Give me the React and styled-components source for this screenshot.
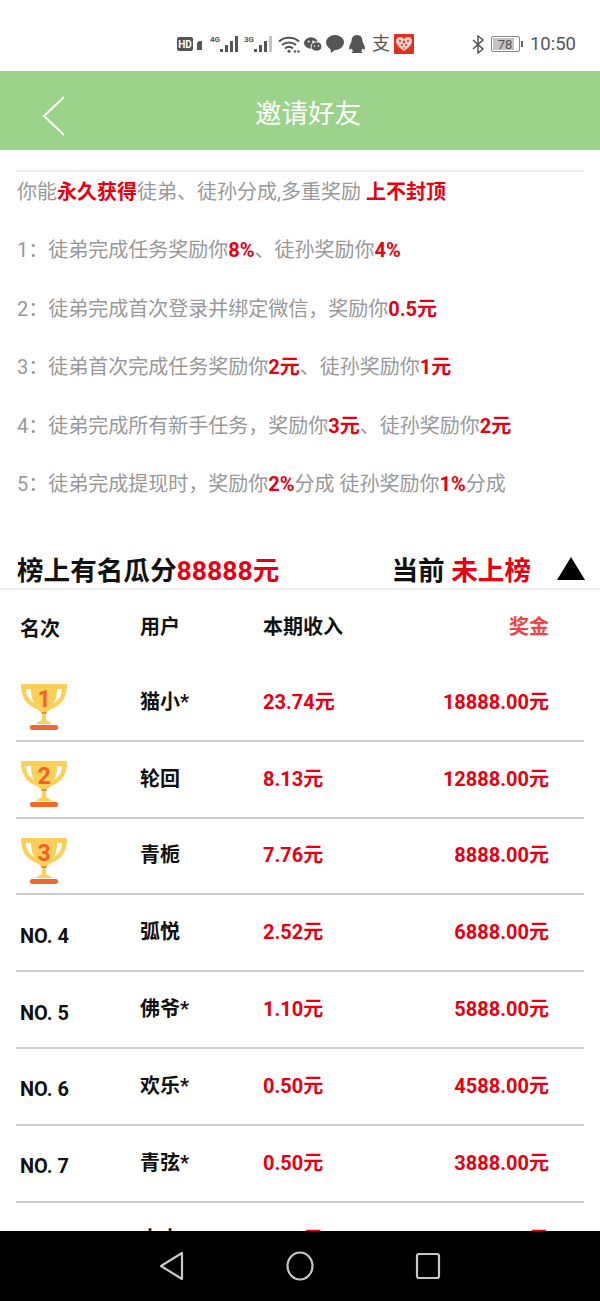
import React from 'react';
import styled, { createGlobalStyle } from 'styled-components';

const GlobalStyle = createGlobalStyle`
  html, body {
    margin: 0;
    padding: 0;
    background: #fff;
    font-family: Roboto, "Noto Sans CJK SC", sans-serif;
  }
  * { box-sizing: border-box; }
`;

const Screen = styled.div`
  width: 600px;
  height: 1301px;
  display: flex;
  flex-direction: column;
  overflow: hidden;
  background: #fff;
`;

const StatusBar = styled.div`
  height: 71px;
  flex: none;
  display: flex;
  align-items: center;
  padding: 17px 24px 0 177px;
  color: #555;
`;

const NotifyIcons = styled.div`
  display: flex;
  align-items: center;
  gap: 4px;
`;

const SystemIcons = styled.div`
  margin-left: auto;
  display: flex;
  align-items: center;
  gap: 6px;
`;

const Clock = styled.span`
  font-size: 18.5px;
  color: #555;
`;

const Header = styled.header`
  height: 79px;
  flex: none;
  background: #9bd38a;
  display: flex;
  align-items: center;
  padding-left: 42px;
`;

const BackIcon = styled.svg`
  margin-top: 10px;
`;

const HeaderTitle = styled.h1`
  margin: 2px 0 0 189px;
  font-size: 26.5px;
  font-weight: 400;
  color: #fff;
`;

const Content = styled.main`
  flex: 1;
  min-height: 0;
  overflow: hidden;
`;

const Intro = styled.section`
  margin: 20px 16px 0;
  border-top: 2px solid #eeeeee;
  display: flex;
  flex-direction: column;
  gap: 18.4px;
`;

const IntroLine = styled.p`
  margin: 0;
  height: 40px;
  padding-left: 1px;
  line-height: 40px;
  font-size: 20px;
  color: #999;
  white-space: nowrap;
`;

const Hot = styled.b`
  color: #e60012;
  font-weight: 700;
`;

const BoardHead = styled.div`
  margin-top: 34px;
  height: 52px;
  padding: 12px 15px 0 17px;
  border-bottom: 2px solid #eeeeee;
  display: flex;
  align-items: center;
  color: #111;
  font-size: 26.6px;
  font-weight: 700;
  white-space: nowrap;
`;

const BoardRed = styled.span`
  color: #e60012;
`;

const CurrentRank = styled.div`
  margin-left: auto;
`;

const Toggle = styled.div`
  margin-left: 26px;
  width: 0;
  height: 0;
  border-left: 14px solid transparent;
  border-right: 14px solid transparent;
  border-bottom: 23px solid #000;
`;

const Row = styled.div`
  margin: 0 16px;
  height: ${p => (p.$head ? '75px' : '76.8px')};
  display: grid;
  grid-template-columns: 120px 123px 120px 1fr;
  align-items: center;
  padding: 0 35px 4px 4px;
  border-bottom: ${p => (p.$head ? 'none' : '2px solid #cfcfcf')};
  font-size: 20px;
  font-weight: 700;
  color: #111;
  white-space: nowrap;
`;

const RankCell = styled.div`
  padding-top: ${p => (p.$medal ? '14px' : p.$label ? '4px' : '10px')};
  padding-left: ${p => (p.$medal ? '1px' : '0')};
`;

const Income = styled.div`
  color: #e60012;
`;

const Prize = styled.div`
  text-align: right;
  color: ${p => (p.$soft ? '#ef4444' : '#e60012')};
`;

const NavBar = styled.nav`
  height: 70px;
  flex: none;
  background: #000;
  display: flex;
  align-items: center;
  justify-content: center;
  gap: 101px;
`;

const Trophy = ({ n }) => (
  <svg width="46" height="48" viewBox="0 0 46 48" style={{ display: 'block' }}>
    <path d="M0 1H46C46 13 42 22 30 26C28 28 26 29 25 30H21C20 29 18 28 16 26C4 22 0 13 0 1Z" fill="#fbcf58" />
    <path d="M5 6H10C10 12 11 16 13 20C8 17 5 12 5 6Z" fill="#fff" />
    <path d="M41 6H36C36 12 35 16 33 20C38 17 41 12 41 6Z" fill="#fff" />
    <rect x="20.500" y="29" width="5" height="2" fill="#f28a2e" />
    <path d="M21.500 31h3l1 6h-5z" fill="#fbcf58" />
    <path d="M15 41c2-2 5-4 8-4s6 2 8 4z" fill="#fbcf58" />
    <rect x="9" y="42" width="28" height="5" rx="2" fill="#f2672a" />
    <text x="23" y="23.500" textAnchor="middle" fontSize="23" fontWeight="700" fontFamily="Roboto" fill="#f0622a">{n}</text>
  </svg>
);

const Signal = ({ label, faded }) => (
  <svg width="30" height="20" viewBox="0 0 30 20" style={{ display: 'block' }}>
    <text x="0" y="8" fontSize="8" fontWeight="700" fontFamily="Roboto" fill="#555">{label}</text>
    <rect x="10" y="15" width="3" height="3" fill="#555" />
    <rect x="15" y="11" width="3" height="7" fill="#555" />
    <rect x="20" y="7" width="3" height="11" fill="#555" />
    <rect x="25" y="2" width="3" height="16" fill={faded ? '#c4c4c4' : '#555'} />
  </svg>
);

const HdBadge = () => (
  <svg width="29" height="14" viewBox="0 0 29 14" style={{ display: 'block' }}>
    <rect x="0" y="0" width="16" height="14" rx="2" fill="#555" />
    <text x="8" y="11" textAnchor="middle" fontSize="10" fontWeight="700" fontFamily="Roboto" fill="#fff">HD</text>
    <path d="M20 6l2-2h3v9h-5z" fill="#555" />
  </svg>
);

const Wifi = () => (
  <svg width="22" height="17" viewBox="0 0 22 17" fill="none" stroke="#555" strokeWidth="2" style={{ display: 'block' }}>
    <path d="M1 5.500c5.500-5 14.500-5 20 0" />
    <path d="M4 9c4-3.500 10-3.500 14 0" />
    <path d="M7 12.500c2.500-2 5.500-2 8 0" />
    <circle cx="11" cy="15.300" r="1.500" fill="#555" stroke="none" />
    <circle cx="17" cy="15.500" r="1.200" fill="#555" stroke="none" />
    <circle cx="20.500" cy="15.500" r="1.200" fill="#555" stroke="none" />
  </svg>
);

const Wechat = () => (
  <svg width="18" height="15" viewBox="0 0 18 15" style={{ display: 'block' }}>
    <ellipse cx="7" cy="6" rx="7" ry="5.800" fill="#555" />
    <ellipse cx="12.500" cy="9.500" rx="5.500" ry="4.700" fill="#555" stroke="#fff" strokeWidth="1" />
    <circle cx="4.700" cy="4.500" r="1" fill="#fff" />
    <circle cx="9" cy="4.500" r="1" fill="#fff" />
    <circle cx="10.500" cy="9" r=".8" fill="#fff" />
    <circle cx="14.500" cy="9" r=".8" fill="#fff" />
  </svg>
);

const Bubble = () => (
  <svg width="18" height="18" viewBox="0 0 18 18" style={{ display: 'block' }}>
    <ellipse cx="9" cy="7.500" rx="9" ry="7.500" fill="#555" />
    <path d="M4 12l1 6 5-4z" fill="#555" />
  </svg>
);

const Penguin = () => (
  <svg width="18" height="19" viewBox="0 0 18 19" style={{ display: 'block' }}>
    <path d="M9 0c3.800 0 5.500 2.800 5.500 6.200 0 1 1.800 3.300 2.300 5.800.4 2-.3 3-1.100 2.500l-1.200-1c-.3 1-.8 2-1.500 2.700 1.100.3 1.700 1.300 1.200 1.800H4c-.5-.5 0-1.500 1.200-1.800-.7-.7-1.200-1.700-1.500-2.700l-1.200 1C1.700 15 1 14 1.200 12 1.700 9.500 3.500 7.200 3.500 6.200 3.500 2.800 5.200 0 9 0z" fill="#555" />
  </svg>
);

const HeartApp = () => (
  <svg width="20" height="20" viewBox="0 0 20 20" style={{ display: 'block' }}>
    <rect width="20" height="20" rx="1" fill="#e0301e" />
    <path d="M10 17C5 13.500 2 10.500 2 7c0-2.500 2-4 4-4 1.700 0 3.100.9 4 2.300C10.900 3.900 12.300 3 14 3c2 0 4 1.500 4 4 0 3.500-3 6.500-8 10z" fill="#f7cfc8" />
    <g fill="#e0301e">
      <circle cx="6" cy="7" r="1" />
      <circle cx="10" cy="8" r="1.200" />
      <circle cx="14" cy="7" r="1" />
      <circle cx="8" cy="11" r="1" />
      <circle cx="12" cy="11" r="1" />
      <circle cx="10" cy="14" r=".8" />
    </g>
  </svg>
);

const Alipay = styled.span`
  width: 18px;
  margin-left: 2px;
  font-size: 18px;
  line-height: 18px;
  color: #555;
`;

const Bluetooth = () => (
  <svg width="13" height="19" viewBox="0 0 13 19" fill="none" stroke="#555" strokeWidth="1.500" style={{ display: 'block' }}>
    <path d="M1 5l10 9-5 4V1l5 4-10 9" />
  </svg>
);

const Battery = () => (
  <svg width="33" height="16" viewBox="0 0 33 16" style={{ display: 'block' }}>
    <rect x=".5" y=".5" width="28" height="15" rx="1.500" fill="#fff" stroke="#888" />
    <rect x="2" y="2" width="21" height="12" fill="#c4c4c4" />
    <rect x="30" y="5" width="2" height="6" fill="#666" />
    <text x="14" y="13" textAnchor="middle" fontSize="13" fontFamily="Roboto" fill="#555">78</text>
  </svg>
);

const ranks = [
  { medal: 1, name: '猫小*', income: '23.74元', prize: '18888.00元' },
  { medal: 2, name: '轮回', income: '8.13元', prize: '12888.00元' },
  { medal: 3, name: '青栀', income: '7.76元', prize: '8888.00元' },
  { label: 'NO. 4', name: '弧悦', income: '2.52元', prize: '6888.00元' },
  { label: 'NO. 5', name: '佛爷*', income: '1.10元', prize: '5888.00元' },
  { label: 'NO. 6', name: '欢乐*', income: '0.50元', prize: '4588.00元' },
  { label: 'NO. 7', name: '青弦*', income: '0.50元', prize: '3888.00元' },
  { label: 'NO. 8', name: '木木', income: '0.50元', prize: '2888.00元' },
];

const App = () => (
  <Screen>
    <GlobalStyle />
    <StatusBar>
      <NotifyIcons>
        <HdBadge />
        <Signal label="4G" />
        <Signal label="3G" faded />
        <Wifi />
        <Wechat />
        <Bubble />
        <Penguin />
        <Alipay>支</Alipay>
        <HeartApp />
      </NotifyIcons>
      <SystemIcons>
        <Bluetooth />
        <Battery />
        <Clock>10:50</Clock>
      </SystemIcons>
    </StatusBar>
    <Header>
      <BackIcon width="24" height="40" viewBox="0 0 24 40" fill="none" stroke="#fff" strokeWidth="2">
        <path d="M22 1L2 20l20 19" />
      </BackIcon>
      <HeaderTitle>邀请好友</HeaderTitle>
    </Header>
    <Content>
      <Intro>
        <IntroLine>你能<Hot>永久获得</Hot>徒弟、徒孙分成,多重奖励 <Hot>上不封顶</Hot></IntroLine>
        <IntroLine>1：徒弟完成任务奖励你<Hot>8%</Hot>、徒孙奖励你<Hot>4%</Hot></IntroLine>
        <IntroLine>2：徒弟完成首次登录并绑定微信，奖励你<Hot>0.5元</Hot></IntroLine>
        <IntroLine>3：徒弟首次完成任务奖励你<Hot>2元</Hot>、徒孙奖励你<Hot>1元</Hot></IntroLine>
        <IntroLine>4：徒弟完成所有新手任务，奖励你<Hot>3元</Hot>、徒孙奖励你<Hot>2元</Hot></IntroLine>
        <IntroLine>5：徒弟完成提现时，奖励你<Hot>2%</Hot>分成 徒孙奖励你<Hot>1%</Hot>分成</IntroLine>
      </Intro>
      <BoardHead>
        榜上有名瓜分<BoardRed>88888元</BoardRed>
        <CurrentRank>当前 <BoardRed>未上榜</BoardRed></CurrentRank>
        <Toggle />
      </BoardHead>
      <Row $head>
        <RankCell $label>名次</RankCell>
        <div>用户</div>
        <div>本期收入</div>
        <Prize $soft>奖金</Prize>
      </Row>
      {ranks.map(r => (
        <Row key={r.name}>
          <RankCell $medal={!!r.medal}>{r.medal ? <Trophy n={r.medal} /> : r.label}</RankCell>
          <div>{r.name}</div>
          <Income>{r.income}</Income>
          <Prize>{r.prize}</Prize>
        </Row>
      ))}
    </Content>
    <NavBar>
      <svg width="26" height="32" viewBox="0 0 26 32" fill="none" stroke="#c8c8c8" strokeWidth="2.200" strokeLinejoin="round">
        <path d="M23 3v26L2 16z" />
      </svg>
      <svg width="28" height="30" viewBox="0 0 28 30" fill="none" stroke="#c8c8c8" strokeWidth="2.200">
        <ellipse cx="14" cy="15" rx="12.500" ry="13.500" />
      </svg>
      <svg width="26" height="30" viewBox="0 0 26 30" fill="none" stroke="#c8c8c8" strokeWidth="2.200">
        <rect x="2" y="3" width="22" height="24" rx="2" />
      </svg>
    </NavBar>
  </Screen>
);

export default App;
